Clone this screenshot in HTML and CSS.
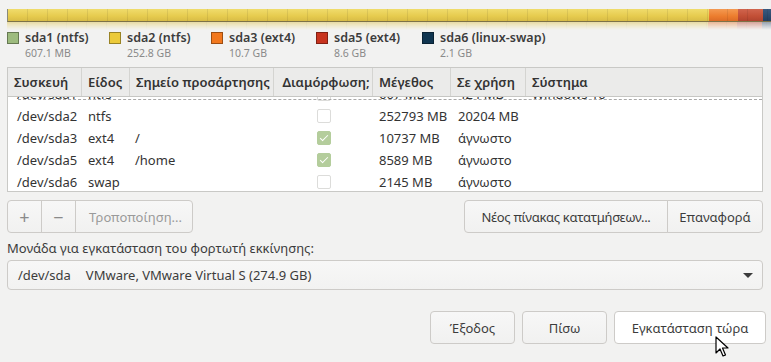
FILE: index.html
```html
<!DOCTYPE html>
<html lang="el">
<head>
  <meta charset="UTF-8"/>
  <title>Εγκατάσταση</title>
  <link rel="stylesheet" href="styles.css">
</head>
<body>

  <!-- partition bar -->
  <div class="bar-wrap">
    <div class="bar">
      <div class="seg yellow" style="width: 701px"></div>
      <div class="seg orange" style="width: 29px"></div>
      <div class="seg red" style="width: 25px"></div>
      <div class="seg navy" style="width: 12px"></div>
    </div>
    <div class="bar reflect">
      <div class="seg yellow" style="width: 701px"></div>
      <div class="seg orange" style="width: 29px"></div>
      <div class="seg red" style="width: 25px"></div>
      <div class="seg navy" style="width: 12px"></div>
    </div>
  </div>

  <!-- legend -->
  <div class="legend">
    <div class="item"><span class="sq green"></span><div><div class="name">sda1 (ntfs)</div><div class="size">607.1 MB</div></div></div>
    <div class="item"><span class="sq yellow"></span><div><div class="name">sda2 (ntfs)</div><div class="size">252.8 GB</div></div></div>
    <div class="item"><span class="sq orange"></span><div><div class="name">sda3 (ext4)</div><div class="size">10.7 GB</div></div></div>
    <div class="item"><span class="sq red"></span><div><div class="name">sda5 (ext4)</div><div class="size">8.6 GB</div></div></div>
    <div class="item"><span class="sq navy"></span><div><div class="name">sda6 (linux-swap)</div><div class="size">2.1 GB</div></div></div>
  </div>

  <!-- partition table -->
  <div class="table">
    <div class="row head">
      <div class="c dev">Συσκευή</div>
      <div class="c type">Είδος</div>
      <div class="c mount">Σημείο προσάρτησης</div>
      <div class="c fmt">Διαμόρφωση;</div>
      <div class="c size">Μέγεθος</div>
      <div class="c used">Σε χρήση</div>
      <div class="c sys">Σύστημα</div>
    </div>
    <div class="rows">
      <div class="row first">
        <div class="c dev">/dev/sda1</div>
        <div class="c type">ntfs</div>
        <div class="c mount"></div>
        <div class="c fmt"><span class="check"></span></div>
        <div class="c size">607 MB</div>
        <div class="c used">424 MB</div>
        <div class="c sys">Windows 10</div>
      </div>
      <div class="row">
        <div class="c dev">/dev/sda2</div>
        <div class="c type">ntfs</div>
        <div class="c mount"></div>
        <div class="c fmt"><span class="check"></span></div>
        <div class="c size">252793 MB</div>
        <div class="c used">20204 MB</div>
        <div class="c sys"></div>
      </div>
      <div class="row">
        <div class="c dev">/dev/sda3</div>
        <div class="c type">ext4</div>
        <div class="c mount">/</div>
        <div class="c fmt"><span class="check on"></span></div>
        <div class="c size">10737 MB</div>
        <div class="c used">άγνωστο</div>
        <div class="c sys"></div>
      </div>
      <div class="row">
        <div class="c dev">/dev/sda5</div>
        <div class="c type">ext4</div>
        <div class="c mount">/home</div>
        <div class="c fmt"><span class="check on"></span></div>
        <div class="c size">8589 MB</div>
        <div class="c used">άγνωστο</div>
        <div class="c sys"></div>
      </div>
      <div class="row">
        <div class="c dev">/dev/sda6</div>
        <div class="c type">swap</div>
        <div class="c mount"></div>
        <div class="c fmt"><span class="check"></span></div>
        <div class="c size">2145 MB</div>
        <div class="c used">άγνωστο</div>
        <div class="c sys"></div>
      </div>
    </div>
  </div>

  <!-- toolbar -->
  <div class="toolbar">
    <div class="group">
      <button class="btn icon">+</button>
      <button class="btn icon">−</button>
      <button class="btn disabled">Τροποποίηση...</button>
    </div>
    <div class="group">
      <button class="btn new">Νέος πίνακας κατατμήσεων...</button>
      <button class="btn reset">Επαναφορά</button>
    </div>
  </div>

  <div class="label">Μονάδα για εγκατάσταση του φορτωτή εκκίνησης:</div>
  <div class="combo">
    <span class="combo-dev">/dev/sda</span>
    <span>VMware, VMware Virtual S (274.9 GB)</span>
    <span class="arrow"></span>
  </div>

  <div class="footer">
    <button class="btn wide">Έξοδος</button>
    <button class="btn wide">Πίσω</button>
    <button class="btn primary">Εγκατάσταση τώρα</button>
    <svg class="cursor" width="14" height="22" viewBox="0 0 14 22">
      <path d="M1 1 L1 17 L5 13 L8 20 L10.5 19 L7.5 12 L13 12 Z" fill="#fff" stroke="#000" stroke-width="1.2" stroke-linejoin="round"/>
    </svg>
  </div>

</body>
</html>
```

FILE: styles.css
```css
* {
  margin: 0; padding: 0;
  box-sizing: border-box;
}

body {
  font-family: 'Noto Sans', 'Open Sans', sans-serif;
  font-size: 13px;
  color: #3c3c3c;
  background: #f2f2f1;
  width: 771px;
  height: 362px;
  overflow: hidden;
  padding: 9px 8px 0 7px;
}

/* partition bar */
.bar-wrap {
  height: 22px;
  margin-right: -8px;
  overflow: hidden;
}

.bar {
  display: flex;
  height: 13px;
  border-left: 1px solid #8a8a7a;
  border-bottom: 1px solid #7d7248;
  position: relative;
}

.bar::after {
  content: "";
  position: absolute;
  top: 0; left: 0;
  width: 100%;
  height: 100%;
  background: repeating-linear-gradient(to right, transparent 0, transparent 19px, rgba(0,0,0,0.08) 19px, rgba(0,0,0,0.08) 20px);
}

.bar.reflect {
  height: 8px;
  border: none;
  transform: scaleY(-1);
  opacity: 0.45;
  -webkit-mask-image: linear-gradient(to top, rgba(0,0,0,1), rgba(0,0,0,0));
  mask-image: linear-gradient(to top, rgba(0,0,0,1), rgba(0,0,0,0));
}

.seg { flex: none; height: 100%; }
.seg.yellow { background: linear-gradient(#f0dc6c, #e6cb4e 60%, #d8bc46); }
.seg.orange { background: linear-gradient(#f49a52, #ec7d2e 60%, #dc6c26); }
.seg.red { background: linear-gradient(#d0654e, #c24f36 60%, #b0432e); }
.seg.navy { background: linear-gradient(#3a5a80, #243f60); }

/* legend */
.legend {
  display: flex;
  margin-top: -1px;
}

.legend .item {
  display: flex;
  gap: 6px;
}

.legend .item:nth-child(1) { width: 102px; }
.legend .item:nth-child(2) { width: 102px; }
.legend .item:nth-child(3) { width: 105px; }
.legend .item:nth-child(4) { width: 106px; }

.sq {
  width: 12px;
  height: 12px;
  margin-top: 2px;
  border: 1px solid rgba(0,0,0,0.35);
}

.sq.green { background: #9dbb7e; }
.sq.yellow { background: #ecca3a; }
.sq.orange { background: #f2781e; }
.sq.red { background: #c8341f; }
.sq.navy { background: #103550; }

.legend .name {
  font-weight: 600;
  font-size: 12.5px;
  line-height: 16px;
  color: #3c3c3c;
}

.legend .size {
  font-size: 10.5px;
  color: #8a8a8a;
  line-height: 14px;
}

/* table */
.table {
  margin-top: 7px;
  border: 1px solid #c9c9c6;
  background: #fff;
  height: 125px;
  overflow: hidden;
  display: flex;
  flex-direction: column;
}

.row {
  display: flex;
  flex: none;
  height: 22px;
  align-items: center;
}

.row.head {
  height: 29px;
  background: #ebebea;
  border-bottom: 1px solid #c6c6c3;
  font-weight: 600;
  color: #4a4a4a;
  position: relative;
  z-index: 1;
}

.row.head .c {
  height: 100%;
  display: flex;
  align-items: center;
  padding-left: 6px;
  border-right: 1px solid #d4d4d1;
}

.row.head .c.sys { border-right: none; }

.rows {
  position: relative;
  flex: 1;
  overflow: hidden;
}

.rows::before {
  content: "";
  position: absolute;
  top: 2px; left: 10px; right: 0;
  border-top: 1px dashed #a8a8a8;
  z-index: 1;
}

.row.first { margin-top: -14px; }

.c { flex: none; white-space: nowrap; color: #333; }
.c.dev { width: 74px; padding-left: 9px; }
.c.type { width: 48px; padding-left: 6px; }
.c.mount { width: 144px; padding-left: 5px; }
.c.fmt { width: 99px; display: flex; justify-content: center; }
.c.size { width: 78px; padding-left: 6px; }
.c.used { width: 75px; padding-left: 7px; }
.c.sys { flex: 1; padding-left: 6px; }

.row.head .c.dev { padding-left: 6px; }

.check {
  width: 14px;
  height: 14px;
  border: 1px solid #dcdcda;
  border-radius: 2px;
  background: #fff;
  position: relative;
}

.check.on {
  background: #b4cd9c;
  border-color: #b4cd9c;
}

.check.on::after {
  content: "";
  position: absolute;
  left: 4px; top: 1px;
  width: 3px;
  height: 7px;
  border: solid #fff;
  border-width: 0 1.5px 1.5px 0;
  transform: rotate(45deg);
}

/* buttons */
.toolbar {
  display: flex;
  justify-content: space-between;
  margin-top: 8px;
}

.group { display: flex; }

.btn {
  font-family: inherit;
  font-size: 13px;
  color: #3c3c3c;
  height: 33px;
  padding: 0 13px;
  white-space: nowrap;
  background: linear-gradient(#f7f7f7, #f1f1f0);
  border: 1px solid #cdcbc8;
  border-radius: 4px;
  cursor: pointer;
}

.group .btn { border-radius: 0; margin-left: -1px; }
.group .btn:first-child { border-radius: 4px 0 0 4px; margin-left: 0; }
.group .btn:last-child { border-radius: 0 4px 4px 0; }

.btn.icon {
  width: 35px;
  padding: 0;
  font-size: 18px;
  color: #8a8a8a;
}

.btn.disabled { color: #9a9a9a; width: 118px; }

.btn.new {
  width: 204px;
  padding: 0 6px;
  letter-spacing: -0.3px;
}

.btn.reset { width: 96px; padding: 0 6px; }

.label {
  margin-top: 6px;
  line-height: 18px;
}

.combo {
  margin-top: 3px;
  height: 30px;
  border: 1px solid #cdcbc8;
  border-radius: 4px;
  background: linear-gradient(#f7f7f7, #f2f2f1);
  display: flex;
  align-items: center;
  padding-left: 10px;
  gap: 15px;
}

.combo .arrow {
  margin-left: auto;
  margin-right: 9px;
  width: 0; height: 0;
  border-left: 5px solid transparent;
  border-right: 5px solid transparent;
  border-top: 5px solid #3c3c3c;
}

.footer {
  display: flex;
  justify-content: flex-end;
  gap: 7px;
  margin-top: 21px;
  margin-right: -3px;
  position: relative;
}

.btn.wide { width: 85px; }

.btn.primary {
  width: 152px;
  background: #fff;
}

.cursor {
  position: absolute;
  left: 708px;
  top: 25px;
}
```
